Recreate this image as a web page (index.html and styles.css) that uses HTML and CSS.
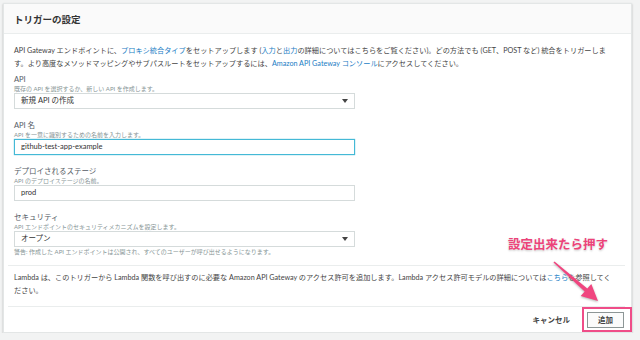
FILE: index.html
```html
<!DOCTYPE html>
<html lang="ja">
<head>
    <meta charset="UTF-8">
    <title>トリガーの設定</title>
    <link rel="stylesheet" href="styles.css">
</head>
<body>
    <div class="panel">
        <div class="panel-header">
            <h2>トリガーの設定</h2>
        </div>

        <div class="panel-body">
            <p class="intro">
                API Gateway エンドポイントに、<a href="#">プロキシ統合タイプ</a>をセットアップします (<a href="#">入力</a>と<a href="#">出力</a>の詳細についてはこちらをご覧ください)。どの方法でも (GET、POST など) 統合をトリガーしま<br>す。より高度なメソッドマッピングやサブパスルートをセットアップするには、<a href="#">Amazon API Gateway コンソール</a>にアクセスしてください。
            </p>

            <div class="field">
                <label class="field-label">API</label>
                <div class="field-hint">既存の API を選択するか、新しい API を作成します。</div>
                <div class="select">新規 API の作成</div>
            </div>

            <div class="field">
                <label class="field-label">API 名</label>
                <div class="field-hint">API を一意に識別するための名前を入力します。</div>
                <div class="input focused">github-test-app-example</div>
            </div>

            <div class="field">
                <label class="field-label">デプロイされるステージ</label>
                <div class="field-hint">API のデプロイステージの名前。</div>
                <div class="input">prod</div>
            </div>

            <div class="field">
                <label class="field-label">セキュリティ</label>
                <div class="field-hint">API エンドポイントのセキュリティメカニズムを設定します。</div>
                <div class="select">オープン</div>
                <div class="field-warning">警告: 作成した API エンドポイントは公開され、すべてのユーザーが呼び出せるようになります。</div>
            </div>
        </div>

        <div class="panel-section">
            <p>Lambda は、このトリガーから Lambda 関数を呼び出すのに必要な Amazon API Gateway のアクセス許可を追加します。Lambda アクセス許可モデルの詳細については<a href="#">こちら</a>を参照してく<br>ださい。</p>
        </div>

        <div class="panel-footer">
            <a href="#" class="cancel">キャンセル</a>
            <button class="add-btn">追加</button>
        </div>
    </div>

    <!-- annotation -->
    <div class="note">設定出来たら押す</div>
    <svg class="note-arrow" width="70" height="60" viewBox="0 0 70 60">
        <polygon points="4.5,2.4 37.3,29.5 41.3,25 48,42 30.7,37 34.7,32.5 3.5,3.6" fill="#f0457f"/>
    </svg>
    <div class="note-box"></div>
</body>
</html>
```

FILE: styles.css
```css
body {
    margin: 0;
    background-color: #f2f3f3;
    font-family: Lato, "Noto Sans CJK JP", sans-serif;
    color: #444;
}

a {
    color: #1a7dc4;
    text-decoration: none;
}

.panel {
    margin: 3px 8px 0 3px;
    height: 330px;
    box-sizing: border-box;
    background-color: #fff;
    border: 1px solid #e3e6e6;
    box-shadow: 0 1px 2px rgba(0, 0, 0, 0.25);
    display: flex;
    flex-direction: column;
}

.panel-header {
    height: 29px;
    background-color: #fafafa;
    border-bottom: 1px solid #eaeded;
    display: flex;
    align-items: center;
    padding: 0 10px;
}

.panel-header h2 {
    margin: 0;
    font-size: 9.5px;
    font-weight: bold;
    color: #333;
}

.panel-body {
    padding: 10px 10px 9px;
}

.intro {
    margin: 0 0 2px;
    font-size: 7.2px;
    line-height: 13px;
    white-space: nowrap;
}

.field {
    margin-bottom: 9px;
}

.field:last-child {
    margin-bottom: 0;
}

.field-label {
    display: block;
    padding-top: 3px;
    font-size: 7.5px;
    line-height: 10px;
    color: #545b64;
}

.field-hint {
    font-size: 6px;
    line-height: 9px;
    color: #879596;
    margin-top: -1px;
    margin-bottom: 0;
}

.field-warning {
    font-size: 6px;
    line-height: 9px;
    color: #879596;
}

.select,
.input {
    width: 341px;
    height: 16px;
    box-sizing: border-box;
    border: 1px solid #d5dbdb;
    padding: 0 6px;
    font-size: 7.5px;
    line-height: 14px;
    color: #333;
    background-color: #fff;
}

.select {
    position: relative;
}

.select::after {
    content: "";
    position: absolute;
    right: 6px;
    top: 5px;
    border-left: 3px solid transparent;
    border-right: 3px solid transparent;
    border-top: 4px solid #444;
}

.input.focused {
    border-color: #44b9d6;
    box-shadow: 0 0 1px #44b9d6;
}

.panel-section {
    margin: 0 6px 0 4px;
    border-top: 1px solid #eaeded;
    border-bottom: 1px solid #eaeded;
    padding: 5px 6px 9px;
}

.panel-section p {
    margin: 0;
    font-size: 7.2px;
    line-height: 13px;
    white-space: nowrap;
}

.panel-footer {
    flex: 1;
    display: flex;
    align-items: center;
    justify-content: flex-end;
    padding: 0 7px;
    gap: 17px;
}

.cancel {
    font-size: 7.5px;
    font-weight: bold;
    color: #444;
}

.add-btn {
    width: 37px;
    height: 16px;
    padding: 0;
    border: 1px solid #8d9696;
    background-color: #fbfbfb;
    font-family: inherit;
    font-size: 7.5px;
    font-weight: bold;
    color: #444;
}

.note {
    position: absolute;
    left: 508px;
    top: 234px;
    font-size: 12.5px;
    font-weight: bold;
    color: #ec4379;
    text-shadow: 0 0 2px #fff, 0 1px 2px rgba(0, 0, 0, 0.25);
}

.note-arrow {
    position: absolute;
    left: 550px;
    top: 259px;
    filter: drop-shadow(0 1px 1px rgba(0, 0, 0, 0.3));
}

.note-box {
    position: absolute;
    left: 582px;
    top: 307px;
    width: 46px;
    height: 21px;
    border: 2px solid #ef4d88;
}
```
